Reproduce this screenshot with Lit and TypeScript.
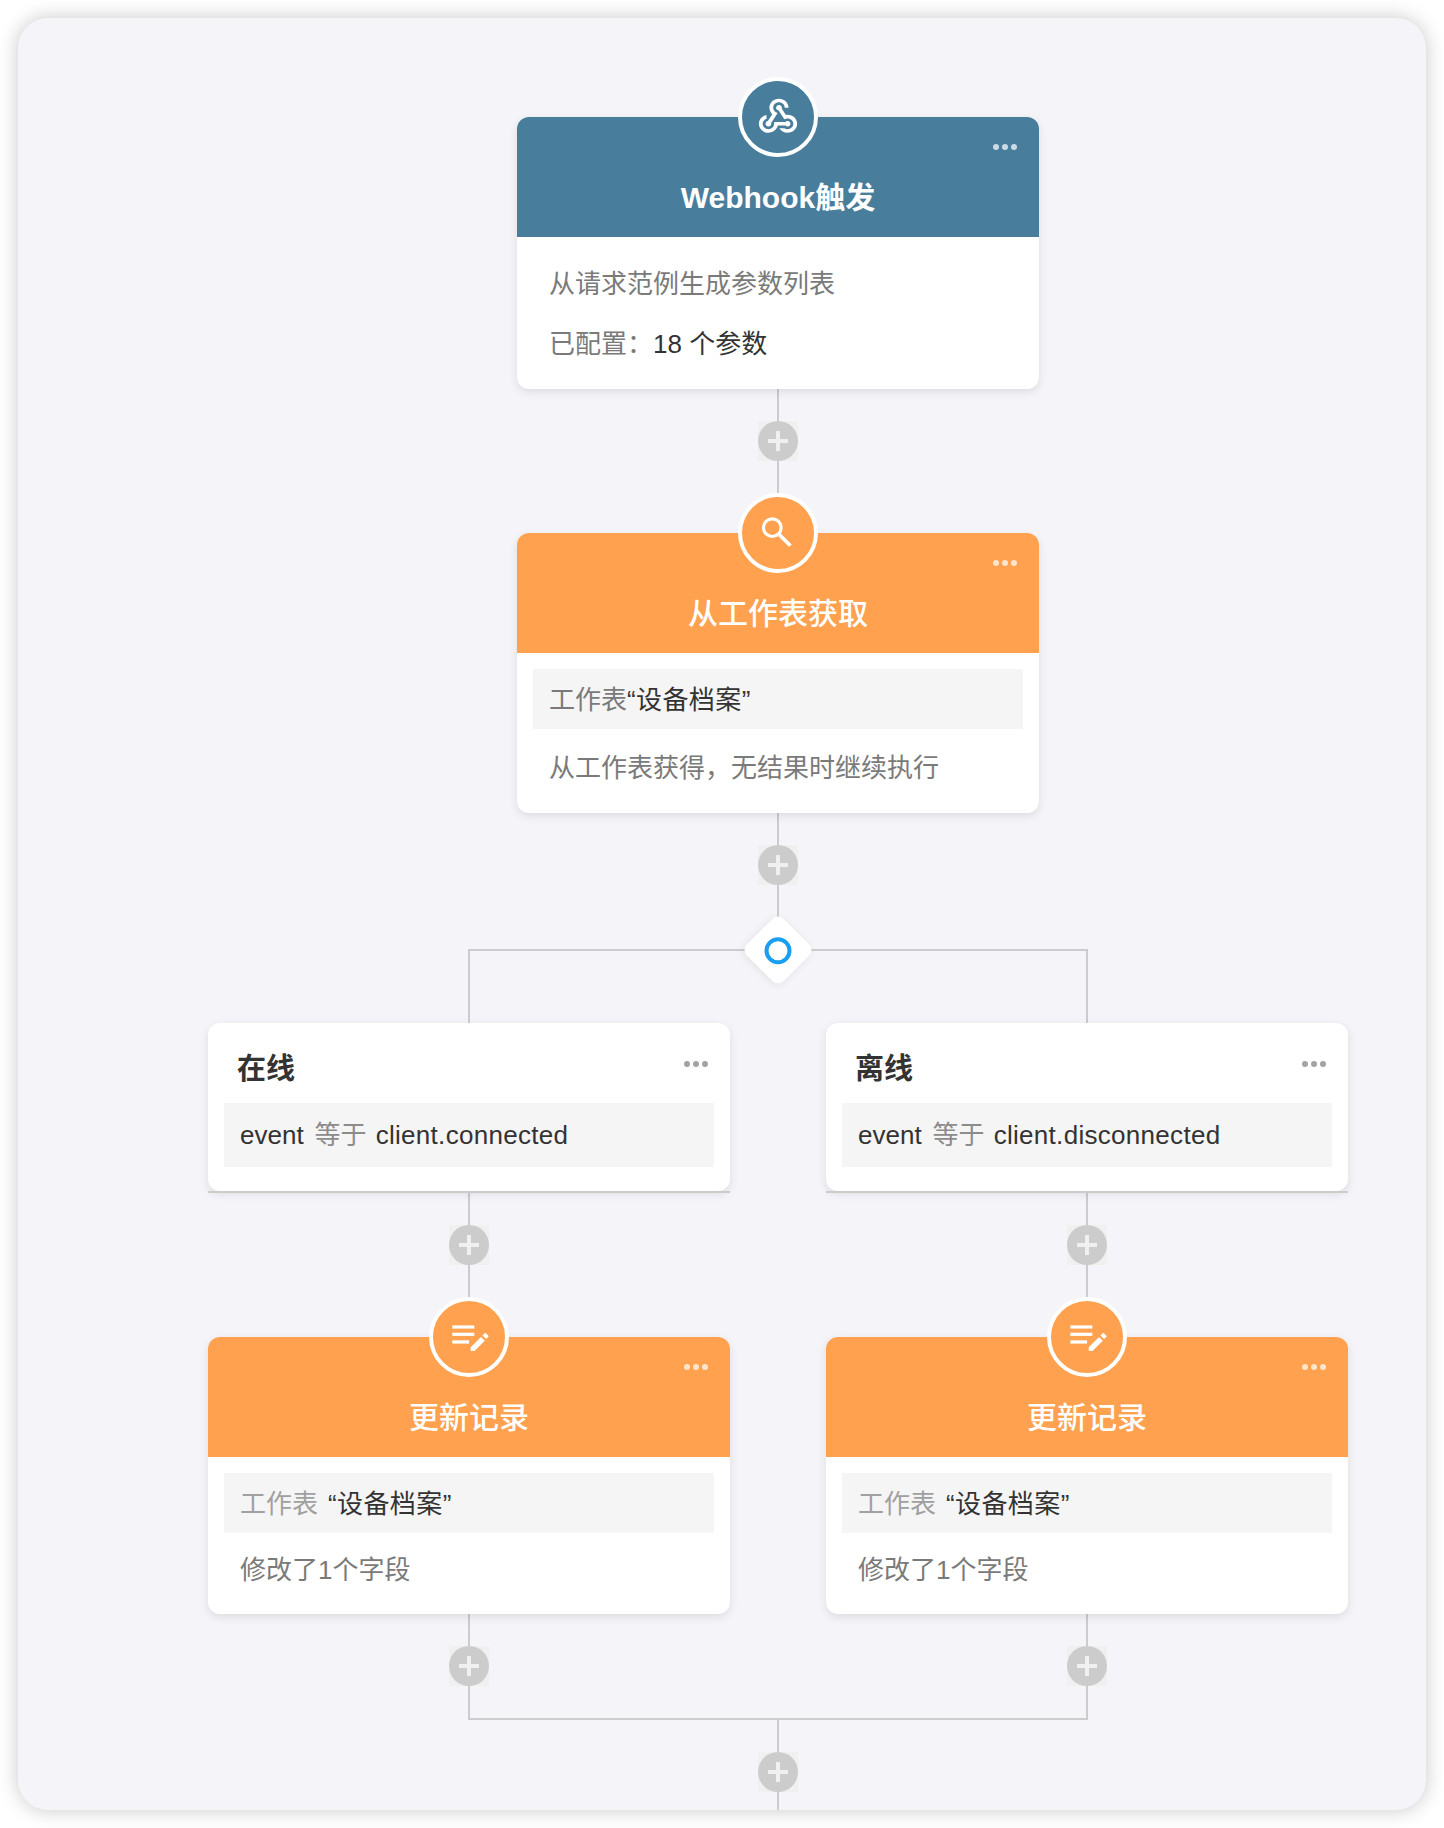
import { LitElement, html, css, svg } from "lit";
import { customElement } from "lit/decorators.js";

const webhookIcon = html`<svg class="wh" viewBox="0 0.5 24 24" preserveAspectRatio="none" fill="#fff"><path d="M10 15h5.88c.27-.31.67-.5 1.12-.5.83 0 1.5.67 1.5 1.5s-.67 1.5-1.5 1.5c-.44 0-.84-.19-1.12-.5H11.9c-.46 2.28-2.48 4-4.9 4-2.76 0-5-2.24-5-5 0-2.42 1.72-4.44 4-4.9v2.07c-1.16.41-2 1.53-2 2.83 0 1.65 1.35 3 3 3s3-1.35 3-3v-1z"/><path d="M12.5 4c1.65 0 3 1.35 3 3h2c0-2.76-2.24-5-5-5s-5 2.24-5 5c0 1.43.6 2.71 1.55 3.62l-2.35 3.9c-.68.14-1.2.75-1.2 1.48 0 .83.67 1.5 1.5 1.5s1.5-.67 1.5-1.5c0-.16-.02-.31-.07-.45l3.38-5.63C10.49 9.61 9.5 8.42 9.5 7c0-1.65 1.35-3 3-3z"/><path d="M17 13c-.64 0-1.23.2-1.72.54l-3.05-5.07C11.53 8.35 11 7.74 11 7c0-.83.67-1.5 1.5-1.5S14 6.17 14 7c0 .15-.02.29-.06.43l2.19 3.65c.28-.05.57-.08.87-.08 2.76 0 5 2.24 5 5s-2.24 5-5 5c-1.85 0-3.47-1.01-4.33-2.5h2.67c.48.32 1.05.5 1.66.5 1.65 0 3-1.35 3-3s-1.35-3-3-3z"/></svg>`;

const searchIcon = html`<svg class="ic" viewBox="0 0 48 48" fill="none" stroke="#fff"><circle cx="18.3" cy="18.7" r="8.8" stroke-width="3.2"/><line x1="25" y1="25.4" x2="36.5" y2="36.8" stroke-width="3.6"/></svg>`;

const updateIcon = html`<svg class="ic" viewBox="0 0 48 48" fill="#fff"><rect x="7.3" y="12.4" width="22" height="3.2"/><rect x="7.3" y="19.7" width="22" height="3.2"/><rect x="7.3" y="27.3" width="16.8" height="3.3"/>${svg`<path d="M25.7 38v-3.8L36 23.9l3.8 3.8L29.5 38z"/><path d="M37.5 22.4l2-2c.5-.5 1.2-.5 1.7 0l2 2c.5.5.5 1.2 0 1.7l-2 2z"/>`}</svg>`;

const plus = html`<div class="plus"><div class="plus-c"></div></div>`;
const dots = html`<div class="dots"><i></i><i></i><i></i></div>`;

@customElement("app-root")
export class AppRoot extends LitElement {
  static styles = css`
    :host {
      display: block;
      width: 1444px;
      height: 1828px;
      box-sizing: border-box;
      padding: 18px;
      background: #fff;
      font-family: "Liberation Sans", "Noto Sans CJK SC", sans-serif;
      font-size: 26px;
      color: #333;
    }
    .canvas {
      box-sizing: border-box;
      width: 1408px;
      height: 1792px;
      padding: 99px 0 0 190px;
      border-radius: 30px;
      background: #f4f4f9;
      box-shadow: 0 0 20px rgba(0, 0, 0, 0.22);
    }
    .flow {
      width: 1140px;
      display: flex;
      flex-direction: column;
      align-items: center;
    }
    .card {
      position: relative;
      width: 522px;
      border-radius: 12px;
      background: #fff;
      box-shadow: 0 3px 10px rgba(0, 0, 0, 0.1);
    }
    .head {
      height: 120px;
      box-sizing: border-box;
      padding-top: 61px;
      border-radius: 12px 12px 0 0;
      color: #fff;
      font-size: 30px;
      line-height: 40px;
      font-weight: 500;
      text-align: center;
    }
    .head.blue, .badge.blue { background: #487d9c; }
    .head.orange, .badge.orange { background: #ffa14e; }
    .head b { font-weight: 700; }
    .badge {
      position: absolute;
      top: -40px;
      left: 50%;
      margin-left: -40px;
      width: 80px;
      height: 80px;
      box-sizing: border-box;
      border: 4px solid #fff;
      border-radius: 50%;
      display: flex;
      align-items: center;
      justify-content: center;
    }
    .wh { width: 46px; height: 43px; }
    .ic { width: 48px; height: 48px; }
    .dots {
      position: absolute;
      top: 26.5px;
      right: 22px;
      display: flex;
      gap: 3px;
    }
    .dots i {
      width: 6px;
      height: 6px;
      border-radius: 50%;
      background: rgba(255, 255, 255, 0.72);
    }
    .cond .dots { top: 38px; }
    .cond .dots i { background: #a3a3a3; }
    .body { padding: 16px 16px 0; }
    .body.first { padding: 16px 32px 16px; }
    .line {
      box-sizing: border-box;
      height: 60px;
      padding-top: 1px;
      line-height: 60px;
      color: #7a7a7a;
      white-space: nowrap;
    }
    .ink { color: #333; }
    .dark { color: #333; letter-spacing: 0.4px; }
    .soft { color: #a0a0a0; margin-right: 10px; }
    .box {
      box-sizing: border-box;
      height: 60px;
      line-height: 60px;
      padding: 1px 16px 0;
      background: #f5f5f5;
      color: #7a7a7a;
      white-space: nowrap;
    }
    .note { padding: 0 16px; white-space: nowrap; color: #7a7a7a; line-height: 40px; }
    .note.b { padding-top: 19px; padding-bottom: 25px; }
    .note.c { padding-top: 17px; padding-bottom: 24px; }
    .cond { height: 168px; box-sizing: border-box; }
    .cond h3 {
      margin: 0;
      box-sizing: border-box;
      height: 80px;
      padding: 26px 0 0 29px;
      font-size: 29px;
      line-height: 40px;
      font-weight: 700;
      color: #333;
    }
    .cond .box { height: 64px; line-height: 64px; margin: 0 16px; padding: 0 16px; color: #333; }
    .cond .box span { color: #8c8c8c; margin: 0 9px 0 11px; }
    .cond .box em { font-style: normal; letter-spacing: 0.3px; }
    .rule { width: 522px; height: 2px; background: #ccc; position: relative; }
    .conn { display: flex; flex-direction: column; align-items: center; }
    .seg { width: 2px; background: #ccc; }
    .plus {
      width: 40px;
      height: 40px;
      background: #f0f0f0;
    }
    .plus-c {
      position: relative;
      width: 40px;
      height: 40px;
      border-radius: 50%;
      background: #ccc;
    }
    .plus-c::before, .plus-c::after {
      content: "";
      position: absolute;
      background: #f0f0f0;
    }
    .plus-c::before { left: 10px; top: 18px; width: 20px; height: 4px; }
    .plus-c::after { left: 18px; top: 10px; width: 4px; height: 20px; }
    .frame {
      position: relative;
      box-sizing: border-box;
      width: 620px;
      height: 74px;
      border: 2px solid #ccc;
      border-bottom: 0;
    }
    .diamond {
      position: absolute;
      top: -27px;
      left: 50%;
      margin-left: -26px;
      width: 52px;
      height: 52px;
      border-radius: 8px;
      background: #fff;
      transform: rotate(45deg);
      box-shadow: 0 2px 8px rgba(0, 0, 0, 0.08);
      display: flex;
      align-items: center;
      justify-content: center;
    }
    .diamond i {
      width: 19px;
      height: 19px;
      border: 4px solid #1a9ff0;
      border-radius: 50%;
    }
    .branches { display: flex; gap: 96px; }
    .col { display: flex; flex-direction: column; align-items: center; width: 522px; }
    .join { width: 620px; height: 2px; background: #ccc; }
  `;

  private conn(a: number, b: number) {
    return html`<div class="conn">
      <div class="seg" style="height:${a}px"></div>
      ${plus}
      ${b ? html`<div class="seg" style="height:${b}px"></div>` : ""}
    </div>`;
  }

  private branch(title: string, value: string) {
    return html`<div class="col">
      <div class="card cond">
        ${dots}
        <h3>${title}</h3>
        <div class="box">event<span>等于</span><em>${value}</em></div>
      </div>
      <div class="rule"></div>
      ${this.conn(32, 72)}
      <div class="card">
        <div class="badge orange">${updateIcon}</div>
        ${dots}
        <div class="head orange">更新记录</div>
        <div class="body">
          <div class="box"><span class="soft">工作表</span><span class="dark">“设备档案”</span></div>
          <div class="note c">修改了1个字段</div>
        </div>
      </div>
      ${this.conn(32, 32)}
    </div>`;
  }

  render() {
    return html`<div class="canvas">
      <div class="flow">
        <div class="card">
          <div class="badge blue">${webhookIcon}</div>
          ${dots}
          <div class="head blue"><b>Webhook触发</b></div>
          <div class="body first">
            <div class="line">从请求范例生成参数列表</div>
            <div class="line">已配置：<span class="ink">18 个参数</span></div>
          </div>
        </div>
        ${this.conn(32, 72)}
        <div class="card">
          <div class="badge orange">${searchIcon}</div>
          ${dots}
          <div class="head orange">从工作表获取</div>
          <div class="body">
            <div class="box">工作表<span class="dark">“设备档案”</span></div>
            <div class="note b">从工作表获得，无结果时继续执行</div>
          </div>
        </div>
        ${this.conn(32, 64)}
        <div class="frame"><div class="diamond"><i></i></div></div>
        <div class="branches">
          ${this.branch("在线", "client.connected")}
          ${this.branch("离线", "client.disconnected")}
        </div>
        <div class="join"></div>
        ${this.conn(32, 18)}
      </div>
    </div>`;
  }
}
